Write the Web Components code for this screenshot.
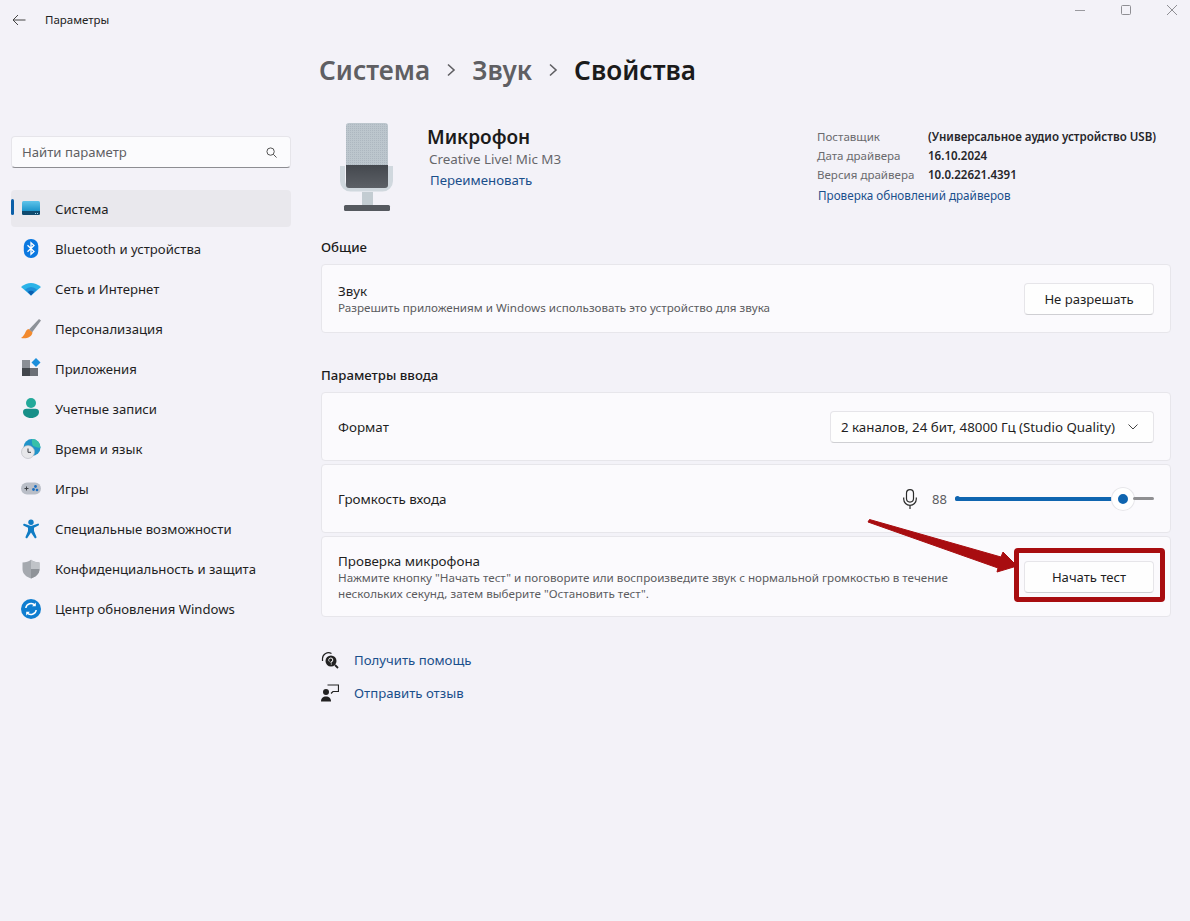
<!DOCTYPE html>
<html lang="ru">
<head>
<meta charset="utf-8">
<title>Параметры</title>
<style>
  html, body { margin: 0; height: 100%; }
  body { background: #f3f2f8; font-family: "Noto Sans", "Open Sans", sans-serif; color: #1b1b1b; overflow: hidden; }
</style>
</head>
<body>
<settings-app>
  <title-bar slot="top">Параметры</title-bar>
  <side-nav slot="side">
    <nav-item active label="Система"><svg viewBox="0 0 20 20"><defs><linearGradient id="s" x1="0" y1="0" x2="0" y2="1"><stop offset="0" stop-color="#5fc4ea"/><stop offset="1" stop-color="#1590c8"/></linearGradient></defs><rect x="1" y="2" width="18" height="11" rx="1.500" fill="url(#s)"/><path d="M1 12h18v2.700a1.300 1.300 0 0 1-1.300 1.300H2.300A1.300 1.300 0 0 1 1 14.700z" fill="#0f4a6e"/><path d="M14 14.500h1M16 14.500h1" stroke="#9fd4ea"/></svg></nav-item>
    <nav-item label="Bluetooth и устройства"><svg viewBox="0 0 20 20"><rect x="2.800" y="0" width="14.500" height="19" rx="7" fill="#0a78e0"/><path d="M6.500 6.300l6.500 6.200-3 2.800V3.700l3 2.800-6.500 6.200" fill="none" stroke="#fff" stroke-width="1.300"/></svg></nav-item>
    <nav-item label="Сеть и Интернет"><svg viewBox="0 0 20 20"><path d="M0 8Q10 0 20 8L10 16.500z" fill="#2bb3e8"/><path d="M4 10.500Q10 5.500 16 10.500L10 16.500z" fill="#1d8fd8"/><path d="M6.800 13Q10 10.500 13.200 13L10 16.500z" fill="#0b5fb0"/></svg></nav-item>
    <nav-item label="Персонализация"><svg viewBox="0 0 20 20"><path d="M18 0L8 10.500l3 3L20 1.500z" fill="#8d9299"/><path d="M7.500 10C4 11 5 15.500 0 19c5.500 1 11-1 11.500-5.500z" fill="#f28a2e"/></svg></nav-item>
    <nav-item label="Приложения"><svg viewBox="0 0 20 20"><rect x="1" y="1" width="8" height="8" fill="#8b8f96"/><rect x="1" y="9" width="8" height="8" fill="#42464c"/><rect x="9" y="9" width="8" height="8" fill="#6c7077"/><path d="M15 -1l4.500 4.500L15 8l-4.500-4.500z" fill="#1c8fdc"/></svg></nav-item>
    <nav-item label="Учетные записи"><svg viewBox="0 0 20 20"><circle cx="10" cy="4" r="5" fill="#23a99a"/><path d="M2 13c0-2 1.500-3.200 3.500-3.200h9c2 0 3.500 1.200 3.500 3.200 0 3.500-3.500 6-8 6s-8-2.500-8-6z" fill="#178f88"/></svg></nav-item>
    <nav-item label="Время и язык"><svg viewBox="0 0 20 20"><circle cx="11" cy="8.500" r="8.500" fill="#1f93c9"/><path d="M11 0a8.500 8.500 0 0 1 8.500 8.500c-3 1-4-1-6-1S10.500 4 11 0z" fill="#37c0a8"/><circle cx="7" cy="13" r="6.500" fill="#e7e7ea" stroke="#b5b7bd" stroke-width=".6"/><path d="M7 9.500V13.300h3" fill="none" stroke="#3a3d42" stroke-width="1"/></svg></nav-item>
    <nav-item label="Игры"><svg viewBox="0 0 20 20"><rect x="0" y="3.500" width="20" height="12" rx="6" fill="#b9bec7"/><path d="M5.500 7.500v4M3.500 9.500h4" stroke="#3d4046" stroke-width="1"/><circle cx="14.500" cy="7.500" r="1.400" fill="#1f6fc0"/><circle cx="12.500" cy="10.500" r="1.400" fill="#1f6fc0"/><circle cx="16" cy="11" r="1.300" fill="#1f6fc0"/></svg></nav-item>
    <nav-item label="Специальные возможности"><svg viewBox="0 0 20 20"><circle cx="10" cy="3.200" r="2.700" fill="#0f7cc4"/><path d="M2.200 5.500a1 1 0 0 1 1.200-.8L10 7l6.600-2.300a1 1 0 0 1 .8 1.900L13 8.800v3.200l2.500 6a1.100 1.100 0 0 1-2 .8L10 13.500l-3.500 5.300a1.100 1.100 0 0 1-2-.8L7 12V8.800L2.800 6.700a1 1 0 0 1-.6-1.200z" fill="#0f7cc4"/></svg></nav-item>
    <nav-item label="Конфиденциальность и защита"><svg viewBox="0 0 20 20"><path d="M10 .8c2.500 2 5 2.700 8.500 2.700V10c0 5-4 8-8.500 9.500C5.500 18 1.500 15 1.500 10V3.500C5 3.500 7.500 2.800 10 .8z" fill="#a5a9af"/><path d="M10 .8c2.500 2 5 2.700 8.500 2.700V10H10z" fill="#c0c3c8"/><path d="M10 10h8.500c0 5-4 8-8.500 9.500z" fill="#8f9399"/></svg></nav-item>
    <nav-item label="Центр обновления Windows"><svg viewBox="0 0 20 20"><circle cx="10" cy="10" r="10" fill="#0f7ed0"/><path d="M4.800 9a5.300 5.300 0 0 1 9.200-2.800M15.200 11a5.300 5.300 0 0 1-9.200 2.800" fill="none" stroke="#fff" stroke-width="1.500"/><path d="M14.800 3.500v3.700h-3.700zM5.200 16.500v-3.700h3.700z" fill="#fff"/></svg></nav-item>
  </side-nav>
  <sound-page slot="main"></sound-page>
  <test-callout></test-callout>
</settings-app>

<script>
class SettingsApp extends HTMLElement {
  constructor() {
    super();
    this.attachShadow({ mode: "open" }).innerHTML = `
      <style>
        :host { display: block; height: 921px; position: relative; overflow: hidden; }
        .body { display: grid; grid-template-columns: 321px 850px; }
      </style>
      <slot name="top"></slot>
      <div class="body">
        <slot name="side"></slot>
        <slot name="main"></slot>
      </div>
      <slot></slot>`;
  }
}

class TitleBar extends HTMLElement {
  constructor() {
    super();
    this.attachShadow({ mode: "open" }).innerHTML = `
      <style>
        :host { display: flex; align-items: center; height: 40px; padding-left: 12px; font-size: 11.500px; color: #222; }
        .back { width: 14px; height: 12px; margin-right: 19px; }
        .title { flex: 1; margin-top: -1px; }
        .ctl { display: flex; align-items: center; gap: 36px; margin: -20px 13px 0 0; }
        .ctl svg { width: 10px; height: 10px; display: block; }
      </style>
      <svg class="back" viewBox="0 0 14 12"><path d="M13.500 6H1M6 1L1 6l5 5" fill="none" stroke="#444" stroke-width="1"/></svg>
      <div class="title"><slot></slot></div>
      <div class="ctl">
        <svg viewBox="0 0 10 10"><path d="M0 5.500h10" stroke="#9a9a9f"/></svg>
        <svg viewBox="0 0 10 10"><rect x=".5" y=".5" width="9" height="9" rx="1" fill="none" stroke="#8f8f94"/></svg>
        <svg viewBox="0 0 10 10"><path d="M0 0l10 10M10 0L0 10" stroke="#8f8f94"/></svg>
      </div>`;
  }
}

class SideNav extends HTMLElement {
  constructor() {
    super();
    this.attachShadow({ mode: "open" }).innerHTML = `
      <style>
        :host { display: block; padding: 96px 30px 0 11px; }
        .search { display: flex; align-items: center; justify-content: space-between; height: 30px; padding: 0 13px 0 10px;
          background: #fbfbfd; border: 1px solid #e6e5ea; border-bottom-color: #8d8d92; border-radius: 4px; font-size: 13.150px; color: #5f5f63; margin-bottom: 22px; }
        .search svg { width: 11px; height: 11px; }
        nav { display: flex; flex-direction: column; gap: 3px; }
      </style>
      <div class="search"><span>Найти параметр</span>
        <svg viewBox="0 0 12 12"><circle cx="5" cy="5" r="4" fill="none" stroke="#444" stroke-width="1"/><path d="M8 8l3.500 3.500" stroke="#444" stroke-width="1"/></svg>
      </div>
      <nav><slot></slot></nav>`;
  }
}

class NavItem extends HTMLElement {
  constructor() {
    super();
    this.attachShadow({ mode: "open" }).innerHTML = `
      <style>
        :host { display: flex; align-items: center; position: relative; height: 37px; border-radius: 4px; font-size: 13.150px; color: #1f1f1f; }
        :host([active]) { background: #e9e8ed; }
        :host([active])::before { content: ""; position: absolute; left: 0; top: 9px; width: 3px; height: 16px; border-radius: 2px; background: #0b5fa8; }
        .ic { width: 20px; height: 20px; margin-left: 10px; margin-right: 14px; flex: none; }
        ::slotted(svg) { width: 20px; height: 20px; display: block; overflow: visible; }
      </style>
      <div class="ic"><slot></slot></div>
      <span class="label"></span>`;
  }
  connectedCallback() {
    this.shadowRoot.querySelector(".label").textContent = this.getAttribute("label");
  }
}

class SettingCard extends HTMLElement {
  constructor() {
    super();
    this.attachShadow({ mode: "open" }).innerHTML = `
      <style>
        :host { display: flex; align-items: center; justify-content: space-between; box-sizing: border-box; padding: 0 16px;
          background: #fbfafd; border: 1px solid #e7e6eb; border-radius: 4px; font-size: 13.400px; color: #1f1f1f; }
        .text { flex: 1; min-width: 0; }
        ::slotted([slot="sub"]) { display: block; font-size: 11.650px; line-height: 16px; color: #5c5c60; }
      </style>
      <div class="text"><slot></slot><slot name="sub"></slot></div>
      <slot name="action"></slot>`;
  }
}

class WinButton extends HTMLElement {
  constructor() {
    super();
    this.attachShadow({ mode: "open" }).innerHTML = `
      <style>
        :host { display: flex; align-items: center; justify-content: center; box-sizing: border-box; width: 130px; height: 32px;
          background: #fefefe; border: 1px solid #e6e5e9; border-bottom-color: #cfcfd3; border-radius: 4px; font-size: 13.100px; color: #1f1f1f; }
      </style>
      <slot></slot>`;
  }
}

class VolumeSlider extends HTMLElement {
  constructor() {
    super();
    this.attachShadow({ mode: "open" }).innerHTML = `
      <style>
        :host { display: flex; align-items: center; font-size: 13px; color: #5c5c60; }
        .mic { width: 14px; height: 20px; margin-right: 15px; }
        .val { width: 23px; }
        .track { display: flex; align-items: center; width: 199px; position: relative; }
        .track::before { content: ""; position: absolute; left: 0; top: 50%; width: 5px; height: 5px; margin-top: -2.500px; border-radius: 50%; background: #0f65b0; }
        .fill { width: 158px; height: 4px; border-radius: 2px; background: #0f65b0; }
        .rest { flex: 1; height: 3px; border-radius: 2px; background: #8f8f92; }
        .thumb { flex: none; width: 22px; height: 22px; box-sizing: border-box; margin: 0 -1px; border-radius: 50%; background: #0f65b0; border: 6px solid #fff; box-shadow: 0 0 0 1px #e7e6ea; }
      </style>
      <svg class="mic" viewBox="0 0 14 20"><rect x="3.500" y=".6" width="7" height="12.500" rx="3.500" fill="none" stroke="#2b2b2b" stroke-width="1.200"/><path d="M.7 8.500v1.500a6.300 6.300 0 0 0 12.600 0V8.500M7 16.300v3.700" fill="none" stroke="#2b2b2b" stroke-width="1.200"/></svg>
      <span class="val"><slot></slot></span>
      <div class="track"><div class="fill"></div><div class="thumb"></div><div class="rest"></div></div>`;
  }
}

class SoundPage extends HTMLElement {
  constructor() {
    super();
    this.attachShadow({ mode: "open" }).innerHTML = `
      <style>
        :host { display: block; padding-top: 9px; color: #1b1b1b; }
        .crumbs { display: flex; align-items: center; height: 42px; font-size: 26.150px; font-weight: 600; color: #5f5f63; margin-left: -2px; }
        .crumbs svg { width: 10px; height: 14px; margin: 0 16px 0 16px; }
        .crumbs b { color: #1b1b1b; font-weight: 600; }
        .device { display: flex; margin-top: 32px; height: 103px; }
        .pic { width: 68px; height: 92px; margin: -1px 0 0 15px; flex: none; }
        .name { margin-left: 23px; }
        .name h1 { margin: 1px 0 0; font-size: 19px; font-weight: 600; line-height: 26px; color: #1b1b1b; }
        .name p { margin: 0 0 0 2px; font-size: 13.400px; line-height: 18px; color: #66666a; }
        a { color: #1a4f8b; text-decoration: none; }
        .name a { display: block; margin: 3px 0 0 3px; font-size: 13.250px; line-height: 18px; }
        .info { margin-left: auto; width: 354px; font-size: 11.550px; line-height: 19.200px; padding-top: 4px; color: #6a6a6e; }
        .info div { display: grid; grid-template-columns: 111px 1fr; }
        .info b { font-weight: 600; color: #26262a; }
        .info a { display: block; margin: 1px 0 0 1px; font-size: 11.700px; }
        h2 { margin: 0; font-size: 13.200px; font-weight: 500; line-height: 18px; color: #1b1b1b; }
        .general { margin-top: 12px; }
        .group { display: flex; flex-direction: column; gap: 3px; margin-top: 8px; }
        .inputs { margin-top: 33px; }
        .c1 { height: 69px; padding-top: 1px; }
        .c2 { height: 69px; }
        .c3 { height: 81px; padding-top: 1px; }
        .select { display: flex; align-items: center; justify-content: space-between; box-sizing: border-box; width: 324px; height: 32px; padding: 0 15px 0 10px;
          background: #fefefe; border: 1px solid #e6e5e9; border-bottom-color: #cfcfd3; border-radius: 4px; font-size: 13.300px; }
        .select svg { width: 10px; height: 6px; }
        .help { display: flex; flex-direction: column; gap: 13px; margin-top: 33px; font-size: 13.200px; }
        .help div { display: flex; align-items: center; height: 20px; }
        .help svg { width: 18px; height: 18px; margin-right: 15px; }
      </style>
      <div class="crumbs">
        <span>Система</span>
        <svg viewBox="0 0 10 14"><path d="M2 1.500L8 7l-6 5.500" fill="none" stroke="#5f5f63" stroke-width="1.600"/></svg>
        <span>Звук</span>
        <svg viewBox="0 0 10 14"><path d="M2 1.500L8 7l-6 5.500" fill="none" stroke="#5f5f63" stroke-width="1.600"/></svg>
        <b>Свойства</b>
      </div>
      <div class="device">
        <svg class="pic" viewBox="0 0 68 92">
          <defs>
            <pattern id="mesh" width="2" height="2" patternUnits="userSpaceOnUse"><rect width="2" height="2" fill="#bcc6cd"/><rect width="1" height="1" fill="#adb7c0"/></pattern>
            <linearGradient id="dark" x1="0" y1="0" x2="0" y2="1"><stop offset="0" stop-color="#44484e"/><stop offset="1" stop-color="#5c6066"/></linearGradient>
          </defs>
          <path d="M6.500 44v15a8 8 0 0 0 8 8h32a8 8 0 0 0 8-8V44" fill="none" stroke="#d0d8de" stroke-width="5"/>
          <rect x="26" y="70" width="11" height="13" fill="#c3ccd2"/>
          <rect x="10" y="1" width="42" height="46" rx="3" fill="url(#mesh)"/>
          <path d="M10 43h42v20a3 3 0 0 1-3 3H13a3 3 0 0 1-3-3z" fill="url(#dark)"/>
          <rect x="8" y="83" width="46" height="6" rx="1.500" fill="#55595f"/>
        </svg>
        <div class="name">
          <h1>Микрофон</h1>
          <p>Creative Live! Mic M3</p>
          <a>Переименовать</a>
        </div>
        <div class="info">
          <div><span>Поставщик</span><b>(Универсальное аудио устройство USB)</b></div>
          <div><span>Дата драйвера</span><b>16.10.2024</b></div>
          <div><span>Версия драйвера</span><b>10.0.22621.4391</b></div>
          <a>Проверка обновлений драйверов</a>
        </div>
      </div>

      <h2 class="general">Общие</h2>
      <div class="group">
        <setting-card class="c1">Звук
          <span slot="sub">Разрешить приложениям и Windows использовать это устройство для звука</span>
          <win-button slot="action">Не разрешать</win-button>
        </setting-card>
      </div>

      <h2 class="inputs">Параметры ввода</h2>
      <div class="group">
        <setting-card class="c2">Формат
          <div class="select" slot="action">2 каналов, 24 бит, 48000 Гц (Studio Quality)
            <svg viewBox="0 0 10 6"><path d="M.5.500L5 5 9.500.500" fill="none" stroke="#444"/></svg>
          </div>
        </setting-card>
        <setting-card class="c2">Громкость входа
          <volume-slider slot="action">88</volume-slider>
        </setting-card>
        <setting-card class="c3">Проверка микрофона
          <span slot="sub">Нажмите кнопку "Начать тест" и поговорите или воспроизведите звук с нормальной громкостью в течение<br>нескольких секунд, затем выберите "Остановить тест".</span>
          <win-button slot="action">Начать тест</win-button>
        </setting-card>
      </div>

      <div class="help">
        <div><svg viewBox="0 0 18 18"><circle cx="10" cy="10" r="5.500" fill="#222"/><circle cx="9.800" cy="9" r="2" fill="none" stroke="#fff" stroke-width="1"/><rect x="8.500" y="8" width="1.500" height="3" fill="#222"/><path d="M10.300 10.500v1M10.300 12.500v1" stroke="#fff"/><path d="M1.500 10V7.500a6 6 0 0 1 9-5" fill="none" stroke="#222" stroke-width="1.200"/><path d="M14 14l3 3" stroke="#222" stroke-width="1.800"/></svg><a>Получить помощь</a></div>
        <div><svg viewBox="0 0 18 18"><circle cx="5" cy="8" r="3" fill="#222"/><path d="M0 17.500c0-3.500 2-5 5-5s5 1.500 5 5z" fill="#222"/><path d="M6.500 1h11v6.500h-5.500l-2 2" fill="none" stroke="#222" stroke-width="1.200"/></svg><a>Отправить отзыв</a></div>
      </div>`;
  }
}

// красная пометка поверх скриншота: рамка и стрелка к кнопке
class TestCallout extends HTMLElement {
  constructor() {
    super();
    this.attachShadow({ mode: "open" }).innerHTML = `
      <style>
        :host { display: block; position: absolute; left: 0; top: 0; width: 1190px; height: 921px; pointer-events: none; }
        svg { width: 100%; height: 100%; display: block; }
      </style>
      <svg viewBox="0 0 1190 921">
        <rect x="1016.500" y="550.500" width="146" height="49" rx="1.500" fill="none" stroke="#a80d10" stroke-width="5"/>
        <path d="M868 522L869.500 519.500 1001 557 1003 552 1017 566 997 572 998 568z" fill="#a80d10" stroke="#a80d10" stroke-linejoin="round"/>
      </svg>`;
  }
}

customElements.define("settings-app", SettingsApp);
customElements.define("title-bar", TitleBar);
customElements.define("side-nav", SideNav);
customElements.define("nav-item", NavItem);
customElements.define("setting-card", SettingCard);
customElements.define("win-button", WinButton);
customElements.define("volume-slider", VolumeSlider);
customElements.define("sound-page", SoundPage);
customElements.define("test-callout", TestCallout);
</script>
</body>
</html>
